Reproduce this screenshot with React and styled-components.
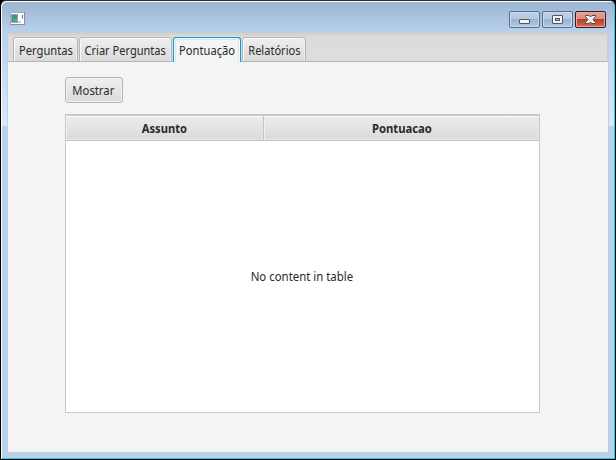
import React from "react";
import styled, { createGlobalStyle, css } from "styled-components";

const Global = createGlobalStyle`
  *, *::before, *::after { box-sizing: border-box; }
  body { margin: 0; background: #000; overflow: hidden; }
`;

const Window = styled.div`
  width: 616px;
  height: 460px;
  display: flex;
  flex-direction: column;
  padding: 1px 7px 7px;
  border: 1px solid #000;
  border-top-color: #2b2b33;
  border-radius: 6px 6px 0 0;
  background:
    linear-gradient(#99b4d1, #b9d1ea) 0 0 / 100% 31px no-repeat,
    linear-gradient(#b9d1ea, #b9d1ea) 6px 31px / 1px 94px no-repeat,
    linear-gradient(#b9d1ea, #b9d1ea) 607px 31px / 1px 94px no-repeat,
    linear-gradient(#b9d1ea, #dbe9f8) 0 31px / 100% 94px no-repeat,
    #b9d1ea;
  box-shadow: inset 1px 1px 0 #fff, inset -1px -1px 0 #1fd0ea;
  font-family: "Noto Sans", "Open Sans", sans-serif;
  font-size: 12px;
  color: #2a2a2a;
`;

const TitleBar = styled.header`
  flex: 0 0 30px;
  display: flex;
  align-items: flex-start;
  justify-content: space-between;
  padding: 9px 2px 0 2px;
`;

const AppIcon = styled.svg`
  width: 16px;
  height: 14px;
  margin-top: 1px;
`;

const Controls = styled.div`
  display: flex;
  gap: 2px;
`;

const ControlButton = styled.button`
  width: 31px;
  height: 17px;
  padding: 0;
  display: grid;
  place-items: center;
  border: 1px solid ${(p) => (p.$danger ? "#43141a" : "#586d86")};
  border-radius: 2px;
  background: ${(p) =>
    p.$danger
      ? "linear-gradient(#e0a198 0 1px, #d88c7d 48%, #b83c22 50%, #cf7058)"
      : "linear-gradient(#bdd0e5, #b3cae2 48%, #96b3d2 50%, #b3cce6)"};
  box-shadow: inset 0 0 0 1px ${(p) => (p.$danger ? "#e5aaa0" : "#c9dcef")};
`;

const Glyph = styled.svg`
  width: 29px;
  height: 15px;
  display: block;
`;

const Content = styled.main`
  flex: 1;
  display: flex;
  flex-direction: column;
  background: #f4f4f4;
`;

const TabStrip = styled.nav`
  flex: 0 0 30px;
  display: flex;
  gap: 1px;
  padding: 5px 5px 0;
  background: linear-gradient(#cbcbcb, #dcdcdc 5px, #dddddd);
  box-shadow: inset 0 -1px 0 #b5b5b5, inset -1px 0 0 #cfcfcf;
`;

const Tab = styled.button`
  width: ${(p) => p.$width}px;
  height: 25px;
  padding: 2px 0 0;
  display: flex;
  align-items: center;
  justify-content: center;
  font: inherit;
  color: inherit;
  border: 1px solid #b5b5b5;
  border-radius: 3px 3px 0 0;
  background: linear-gradient(#efefef, #d9d9d9);
  box-shadow: inset 1px 1px 0 #fafafa, inset -1px 0 0 #eaeaea;
  ${(p) =>
    p.$active &&
    css`
      border-color: #039ed3;
      border-bottom: 0;
      padding-bottom: 1px;
      background: #f4f4f4;
      box-shadow: inset 1px 1px 0 #f5fafc, inset 2px 2px 0 #d5e7ef,
        inset -1px 0 0 #f5fafc, inset -2px 0 0 #d5e7ef;
    `}
`;

const Label = styled.span`
  display: inline-block;
  white-space: nowrap;
  line-height: 16px;
  transform: scaleX(${(p) => p.$stretch || 1});
`;

const Pane = styled.section`
  flex: 1;
  display: flex;
  flex-direction: column;
  align-items: flex-start;
  gap: 11px;
  padding: 15px 57px 0;
`;

const PushButton = styled.button`
  width: 58px;
  height: 26px;
  padding: 0 1px 0 0;
  font: inherit;
  color: inherit;
  border: 1px solid #b5b5b5;
  border-radius: 3px;
  background: linear-gradient(#f0f0f0, #dadada);
  box-shadow: inset 0 0 0 1px #f0f0f0;
`;

const Table = styled.div`
  width: 475px;
  height: 299px;
  display: flex;
  flex-direction: column;
  border: 1px solid #c8c8c8;
  border-top-width: 2px;
  background: #fff;
`;

const HeaderRow = styled.div`
  display: grid;
  grid-template-columns: 198px 1fr;
  height: 25px;
  border-bottom: 1px solid #c4c4c4;
`;

const HeaderCell = styled.div`
  display: flex;
  align-items: center;
  justify-content: center;
  padding-top: 1px;
  font-weight: 700;
  border-right: ${(p) => (p.$last ? "0" : "1px solid #c4c4c4")};
  background: linear-gradient(#ececec, #dadada);
  box-shadow: inset 0 1px 0 #fff, inset 1px 0 0 #f0f0f0, inset -1px -1px 0 #e6e6e6;
`;

const Placeholder = styled.div`
  flex: 1;
  display: flex;
  align-items: center;
  justify-content: center;
  padding-right: 2px;
`;

const tabs = [
  { label: "Perguntas", width: 65, stretch: 0.93 },
  { label: "Criar Perguntas", width: 93, stretch: 0.92 },
  { label: "Pontuação", width: 68, stretch: 0.93, active: true },
  { label: "Relatórios", width: 64, stretch: 0.92 },
];

export default function App() {
  return (
    <>
      <Global />
      <Window>
        <TitleBar>
          <AppIcon viewBox="0 0 16 14" shapeRendering="crispEdges">
            <rect x="0" y="0" width="15" height="13" fill="#8c8f94" />
            <rect x="0" y="0" width="14" height="12" fill="#a9adb2" />
            <rect x="1" y="1" width="13" height="11" fill="#fff" />
            <rect x="1" y="2" width="7" height="9" fill="#8fa9b8" />
            <rect x="2" y="3" width="5" height="7" fill="#3f8f94" />
            <rect x="3" y="6" width="4" height="4" fill="#4fa67c" />
            <rect x="8" y="9" width="3" height="2" fill="#ccc" />
            <rect x="12" y="3" width="1" height="2" fill="#2766a8" />
            <rect x="12" y="5" width="1" height="2" fill="#58aa70" />
          </AppIcon>
          <Controls>
            <ControlButton aria-label="Minimize">
              <Glyph viewBox="0 0 29 15">
                <rect x="9.5" y="7.5" width="10" height="4" rx="0.5" fill="#f4f4f4" stroke="#52565e" />
              </Glyph>
            </ControlButton>
            <ControlButton aria-label="Maximize">
              <Glyph viewBox="0 0 29 15">
                <rect x="9.5" y="3.5" width="10" height="8" rx="0.5" fill="#f4f4f4" stroke="#52565e" />
                <rect x="12.5" y="6.5" width="4" height="2" fill="#9bb6d0" stroke="#52565e" />
              </Glyph>
            </ControlButton>
            <ControlButton $danger aria-label="Close">
              <Glyph viewBox="0 0 29 15">
                <path
                  d="M9.5 3.5h3.7l1.3 1.6 1.3-1.6h3.7v1L17.1 7.5l2.4 3v1h-3.7l-1.3-1.6-1.3 1.6H9.5v-1l2.4-3-2.4-3z"
                  fill="#f6f6f6"
                  stroke="#54484e"
                />
              </Glyph>
            </ControlButton>
          </Controls>
        </TitleBar>
        <Content>
          <TabStrip>
            {tabs.map((t) => (
              <Tab key={t.label} $width={t.width} $active={t.active}>
                <Label $stretch={t.stretch}>{t.label}</Label>
              </Tab>
            ))}
          </TabStrip>
          <Pane>
            <PushButton>
              <Label $stretch={0.94}>Mostrar</Label>
            </PushButton>
            <Table>
              <HeaderRow>
                <HeaderCell>
                  <Label $stretch={0.93}>Assunto</Label>
                </HeaderCell>
                <HeaderCell $last>
                  <Label $stretch={0.94}>Pontuacao</Label>
                </HeaderCell>
              </HeaderRow>
              <Placeholder>
                <Label $stretch={0.95}>No content in table</Label>
              </Placeholder>
            </Table>
          </Pane>
        </Content>
      </Window>
    </>
  );
}
